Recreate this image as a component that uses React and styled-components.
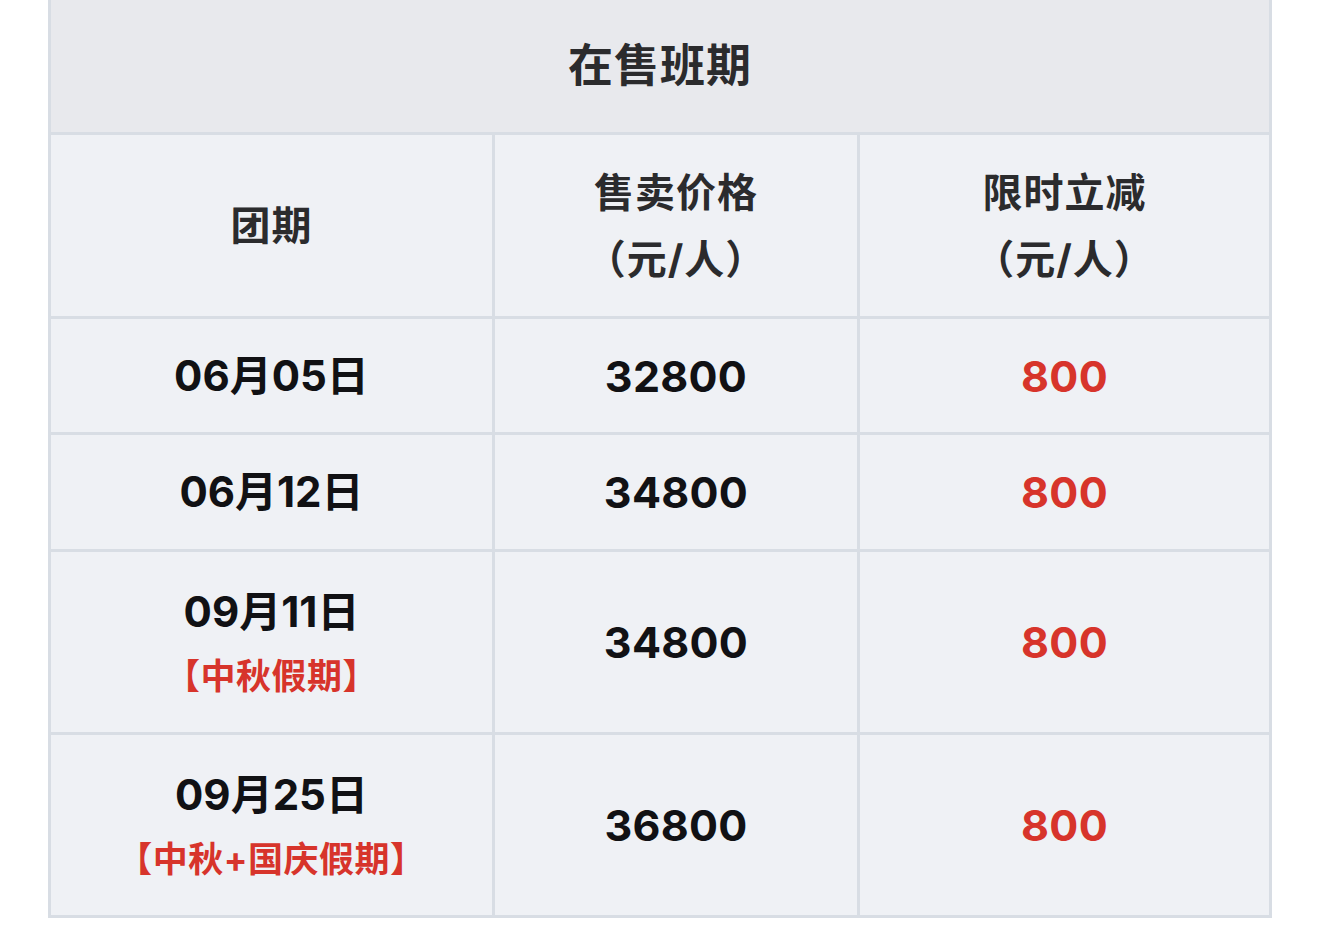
import React from 'react'
import styled, { createGlobalStyle } from 'styled-components'

const GlobalStyle = createGlobalStyle`
  html, body {
    margin: 0;
    padding: 0;
    background: #ffffff;
  }
  body {
    font-family: Inter, "Noto Sans CJK SC", sans-serif;
  }
`

const Table = styled.div`
  width: 1224px;
  margin-left: 48px;
  display: grid;
  grid-template-columns: 441px 362px 409px;
  grid-template-rows: 132px 181px 113px 114px 180px 180px;
  gap: 3px;
  padding: 0 3px 3px 3px;
  box-sizing: border-box;
  background: #d8dde4;
`

const TitleCell = styled.div`
  grid-column: 1 / -1;
  display: flex;
  align-items: center;
  justify-content: center;
  padding-bottom: 8px;
  background: #e8e9ed;
  color: #2b2b2d;
  font-size: 45px;
  font-weight: 700;
  letter-spacing: 1px;
`

const Cell = styled.div`
  display: flex;
  flex-direction: column;
  align-items: center;
  justify-content: center;
  background: #eff1f5;
  text-align: center;
`

const HeadText = styled.div`
  color: #2b2b2d;
  font-size: 40px;
  font-weight: 700;
  line-height: 67px;
  letter-spacing: 1px;
`

const DateText = styled.div`
  color: #111114;
  font-size: 42px;
  font-weight: 700;
  line-height: ${p => (p.$tall ? '68px' : '50px')};
`

const Holiday = styled.div`
  color: #d7342b;
  font-size: 35px;
  font-weight: 700;
  line-height: 60px;
  letter-spacing: 0.5px;
`

const Num = styled.div`
  color: ${p => (p.$red ? '#d7342b' : '#111114')};
  font-size: 43px;
  font-weight: 700;
  letter-spacing: 0.3px;
`

const rows = [
  { date: '06月05日', price: '32800', cut: '800' },
  { date: '06月12日', price: '34800', cut: '800' },
  { date: '09月11日', note: '【中秋假期】', price: '34800', cut: '800' },
  { date: '09月25日', note: '【中秋+国庆假期】', price: '36800', cut: '800' },
]

export default function App() {
  return (
    <>
      <GlobalStyle />
      <Table>
        <TitleCell>在售班期</TitleCell>
        <Cell>
          <HeadText>团期</HeadText>
        </Cell>
        <Cell>
          <HeadText>售卖价格</HeadText>
          <HeadText>（元/人）</HeadText>
        </Cell>
        <Cell>
          <HeadText>限时立减</HeadText>
          <HeadText>（元/人）</HeadText>
        </Cell>
        {rows.map(r => (
          <React.Fragment key={r.date}>
            <Cell>
              <DateText $tall={!!r.note}>{r.date}</DateText>
              {r.note && <Holiday>{r.note}</Holiday>}
            </Cell>
            <Cell>
              <Num>{r.price}</Num>
            </Cell>
            <Cell>
              <Num $red>{r.cut}</Num>
            </Cell>
          </React.Fragment>
        ))}
      </Table>
    </>
  )
}
